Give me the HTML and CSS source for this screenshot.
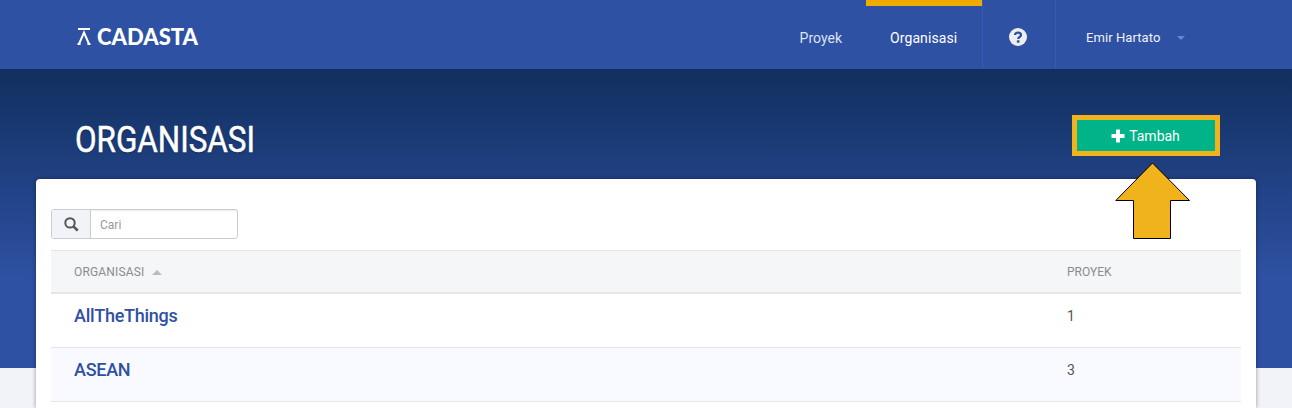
FILE: index.html
```html
<!DOCTYPE html>
<html lang="id">
<head>
<meta charset="utf-8">
<title>Organisasi</title>
<link rel="stylesheet" href="styles.css">
</head>
<body>
<header class="topbar">
  <a class="logo">
    <svg class="logo-mark" width="14" height="18" viewBox="0 0 14 18" fill="none" stroke="#fff"><path d="M1 2H13" stroke-width="2"/><path d="M2 17 7 5.500 12 17M.5 17H3.600M10.400 17H13.500" stroke-width="2"/></svg>
    <svg class="logo-name" width="101" height="22"><text x="0" y="18" textLength="101" lengthAdjust="spacingAndGlyphs">CADASTA</text></svg>
  </a>
  <nav class="nav">
    <a class="nav-item">Proyek</a>
    <a class="nav-item active">Organisasi</a>
    <a class="nav-help"><svg width="18" height="18" viewBox="0 0 18 18"><circle cx="9" cy="9" r="9" fill="#eee"/><path d="M6 7.1C6 3.8 12 3.9 12 7c0 2-2.8 1.9-2.8 4" fill="none" stroke="#2e51a3" stroke-width="2.3"/><path d="M7.9 12.3h2.6v2.4H7.9z" fill="#2e51a3"/></svg></a>
    <a class="nav-user">Emir Hartato<span class="caret"></span></a>
  </nav>
</header>
<section class="hero">
  <h1 class="title">ORGANISASI</h1>
  <a class="add"><svg width="14" height="14" viewBox="0 0 14 14"><path d="M5 .5h4V5h4.500v4H9v4.500H5V9H.5V5H5z" fill="#fff"/></svg>Tambah</a>
</section>
<main class="panel">
  <div class="search">
    <span class="search-icon"><svg width="15" height="15" viewBox="0 0 15 15" fill="none" stroke="#555"><circle cx="6" cy="5.900" r="4.700" stroke-width="2"/><path d="m9.400 9.300 4.300 4.300" stroke-width="2.600"/></svg></span>
    <span class="search-field">Cari</span>
  </div>
  <div class="table">
    <div class="row head"><span class="name">ORGANISASI<i class="sort"></i></span><span>PROYEK</span></div>
    <div class="row"><span class="name">AllTheThings</span><span>1</span></div>
    <div class="row alt"><span class="name">ASEAN</span><span>3</span></div>
    <div class="row last"></div>
  </div>
</main>
<svg class="arrow" width="76" height="78" viewBox="0 0 76 78"><path d="M37.500 1 74.500 38.500H55.500V76.500H18.500V38.500H.8z" fill="#f0b31b" stroke="#000"/></svg>
</body>
</html>
```
FILE: styles.css
```css
* { box-sizing: border-box; }
body {
  margin: 0;
  height: 408px;
  overflow: hidden;
  position: relative;
  background: #f2f3f8;
  font: 14px/20px Roboto, sans-serif;
}
.topbar {
  display: flex;
  justify-content: space-between;
  height: 69px;
  padding: 0 107px 0 77px;
  background: #2e51a3;
}
.logo { display: flex; gap: 6px; padding-top: 27px; }
.logo-name { overflow: visible; }
.logo-name text { font: 900 22.500px Lato, sans-serif; fill: #fff; }
.nav { display: flex; color: #dde2ef; }
.nav-item { padding: 28px 24px 0; }
.nav-item.active {
  width: 116px;
  padding-top: 22px;
  border-top: 6px solid #efab00;
  color: #fff;
  letter-spacing: .1px;
}
.nav-help {
  width: 73px;
  padding: 28px 0 0 26px;
  border-left: 1px solid #365bb5;
}
.nav-help svg { display: block; }
.nav-user {
  display: flex;
  justify-content: space-between;
  width: 130px;
  padding: 28px 0 0 30px;
  border-left: 1px solid #365bb5;
  color: #f0f2f8;
  font-size: 13px;
  letter-spacing: .08px;
}
.caret {
  height: 4px;
  margin-top: 8px;
  border: 4px solid transparent;
  border-top-color: #6688d0;
  border-bottom: 0;
}
.hero {
  display: flex;
  justify-content: space-between;
  height: 299px;
  padding: 46px 72px 0 75px;
  background: linear-gradient(#112f5f, #2e51a3 210px);
}
.title {
  margin: 5px 0 0;
  height: 40px;
  font-size: 36px;
  font-weight: 400;
  line-height: 40px;
  color: #fff;
  -webkit-text-stroke: .5px #fff;
  text-shadow: 0 1px 2px rgba(0, 0, 0, .3);
  transform: scaleX(.872);
  transform-origin: left;
}
.add {
  display: flex;
  align-items: center;
  justify-content: center;
  gap: 4px;
  width: 148px;
  height: 41px;
  padding-right: 1px;
  border: 5px solid #f0b31b;
  background: #00b388;
  color: #fff;
}
.panel {
  position: relative;
  height: 229px;
  margin: -189px 36px 0;
  padding: 30px 15px 0;
  border-radius: 4px 4px 0 0;
  background: #fff;
  box-shadow: 0 0 4px rgba(0, 0, 0, .4);
}
.search {
  display: flex;
  width: 187px;
  height: 30px;
  border: 1px solid #ccc;
  border-radius: 3px;
  box-shadow: inset 0 1px 1px rgba(0, 0, 0, .07);
  font-size: 12px;
  line-height: 30px;
  color: #999;
}
.search-icon {
  width: 39px;
  padding: 7px 0 0 12px;
  border-right: 1px solid #ccc;
  background: #f2f3f8;
}
.search-icon svg { display: block; }
.search-field { padding-left: 9px; }
.table { margin-top: 11px; color: #555; }
.row {
  display: grid;
  grid-template-columns: 992px 1fr;
  height: 54px;
  padding: 12px 24px 0;
  border-top: 1px solid #e4e7ea;
}
.row .name {
  margin-left: -1px;
  font-size: 18px;
  font-weight: 500;
  letter-spacing: -.27px;
  color: #2e51a3;
}
.row.head {
  height: 42px;
  padding-top: 11px;
  background: #f5f6f8;
  font-size: 12px;
  color: #8c8c8c;
}
.row.head .name {
  font-size: 12px;
  font-weight: 400;
  letter-spacing: .15px;
  color: #8c8c8c;
}
.head + .row { height: 55px; border-top: 2px solid #e4e7ea; }
.row.alt { background: #f9faff; }
.row.last { height: 7px; padding: 0; }
.sort {
  display: inline-block;
  margin-left: 8px;
  border: 5px solid transparent;
  border-bottom-color: #bbb;
  border-top: 0;
  vertical-align: 1px;
}
.arrow { position: absolute; left: 1115px; top: 162px; }
```
